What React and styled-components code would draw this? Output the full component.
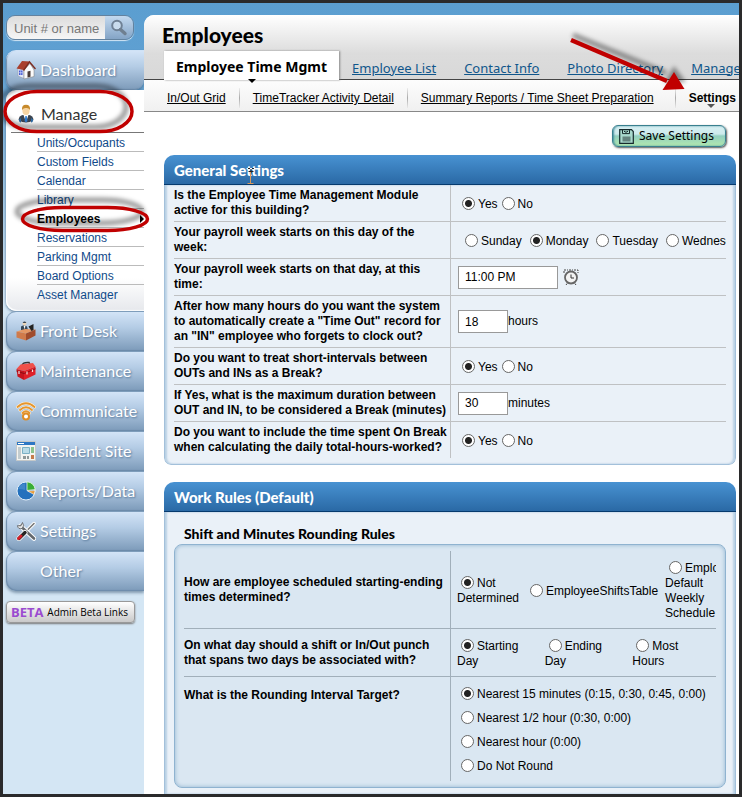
import React, { useState } from 'react';
import styled, { createGlobalStyle } from 'styled-components';

const App = () => {
  return (
    <>
      <GlobalStyle />
      <Frame>
        <Sidebar>
          <Search>
            <SearchInput aria-label='Unit # or name' placeholder='Unit # or name' />
            <SearchButton aria-label='Search'>
              <svg width='18' height='18' viewBox='0 0 18 18'>
                <circle cx='7' cy='6.5' r='4.8' fill='#c9dcee' stroke='#6f8195' strokeWidth='2' />
                <path d='M10.5 10.5 L15 14.5' stroke='#6f7f90' strokeWidth='3.4' strokeLinecap='round' />
              </svg>
            </SearchButton>
          </Search>
          <NavTab href='#dashboard' $first><NavIcon><HouseIcon /></NavIcon>Dashboard</NavTab>
          <OpenPanel>
            <OpenTab href='#manage'><NavIcon><PersonIcon /></NavIcon>Manage</OpenTab>
            <SubList>
              {manageLinks.map((name) => (
                <SubItem key={name}>
                  <SubLink href='#sub' $current={name === 'Employees'}>{name}</SubLink>
                </SubItem>
              ))}
            </SubList>
          </OpenPanel>
          {navTabs.map(({ name, Icon }) => (
            <NavTab key={name} href='#nav'>
              <NavIcon>{Icon && <Icon />}</NavIcon>{name}
            </NavTab>
          ))}
          <BetaButton><b>BETA</b>Admin Beta Links</BetaButton>
        </Sidebar>

        <Main>
          <Header>
            <Title>Employees</Title>
            <Tabs>
              <ActiveTab href='#time'>Employee Time Mgmt</ActiveTab>
              <Tab href='#list'>Employee List</Tab>
              <Tab href='#contact'>Contact Info</Tab>
              <Tab href='#photos'>Photo Directory</Tab>
              <Tab href='#manage-employees'>Manage</Tab>
            </Tabs>
          </Header>
          <SubNav>
            <SubNavLink href='#grid'>In/Out Grid</SubNavLink>
            <SubNavLink href='#activity'>TimeTracker Activity Detail</SubNavLink>
            <SubNavLink href='#summary'>Summary Reports / Time Sheet Preparation</SubNavLink>
            <SubNavLink href='#settings' $current>Settings</SubNavLink>
          </SubNav>

          <Content>
            <SaveButton>
              <svg width='15' height='15' viewBox='0 0 15 15'>
                <path d='M.7.7h11.8l1.8 1.8v11.8H.7z' fill='#a9d9cd' stroke='#16292b' strokeWidth='1.2' />
                <path d='M3.5 1v3.6h7V1M5 2.2q2 2.2 4 0' fill='none' stroke='#16292b' />
                <path d='M3.5 7.5h8v5h-8z' fill='#64837e' />
              </svg>
              Save Settings
            </SaveButton>
            <GeneralSettings />
            <WorkRules />
          </Content>
        </Main>
        <Markup />
      </Frame>
    </>
  );
};

const Choice = ({ name, value, label, current, onPick, narrow }) => {
  const [first, ...rest] = label.split(' ');
  return (
    <ChoiceLabel $narrow={narrow}>
      <FirstWord>
        <Radio type='radio' name={name} checked={current === value} onChange={() => onPick(value)} />
        {first}
      </FirstWord>
      {rest.length > 0 && ' ' + rest.join(' ')}
    </ChoiceLabel>
  );
};

const Choices = ({ name, options, start, narrow }) => {
  const [current, setCurrent] = useState(start);
  return options.map((label) => (
    <Choice
      key={label}
      name={name}
      value={label}
      label={label}
      current={current}
      onPick={setCurrent}
      narrow={narrow && label.includes(' ')}
    />
  ));
};

const GeneralSettings = () => (
  <Panel>
    <PanelTitle>General Settings</PanelTitle>
    <PanelBody>
      <Table>
        <tbody>
          <tr>
            <Question>Is the Employee Time Management Module active for this building?</Question>
            <Answer><Choices name='active' options={['Yes', 'No']} start='Yes' /></Answer>
          </tr>
          <tr>
            <Question>Your payroll week starts on this day of the week:</Question>
            <Answer>
              <DayRow><Choices name='day' options={days} start='Monday' /></DayRow>
            </Answer>
          </tr>
          <tr>
            <Question><label htmlFor='startTime'>Your payroll week starts on that day, at this time:</label></Question>
            <Answer>
              <Field>
                <TextBox id='startTime' $width={100} defaultValue='11:00 PM' />
                <ClockButton aria-label='Pick a time'><ClockIcon /></ClockButton>
              </Field>
            </Answer>
          </tr>
          <tr>
            <Question>
              <label htmlFor='autoOut'>
                After how many hours do you want the system to automatically create a "Time Out" record for an "IN" employee who forgets to clock out?
              </label>
            </Question>
            <Answer><Field><TextBox id='autoOut' $width={50} defaultValue='18' />hours</Field></Answer>
          </tr>
          <tr>
            <Question>Do you want to treat short-intervals between OUTs and INs as a Break?</Question>
            <Answer><Choices name='short' options={['Yes', 'No']} start='Yes' /></Answer>
          </tr>
          <tr>
            <Question>
              <label htmlFor='maxBreak'>If Yes, what is the maximum duration between OUT and IN, to be considered a Break (minutes)</label>
            </Question>
            <Answer><Field><TextBox id='maxBreak' $width={50} defaultValue='30' />minutes</Field></Answer>
          </tr>
          <tr>
            <Question>Do you want to include the time spent On Break when calculating the daily total-hours-worked?</Question>
            <Answer><Choices name='onBreak' options={['Yes', 'No']} start='Yes' /></Answer>
          </tr>
        </tbody>
      </Table>
    </PanelBody>
  </Panel>
);

const WorkRules = () => (
  <Panel $open>
    <PanelTitle>Work Rules (Default)</PanelTitle>
    <PanelBody $open>
      <RulesTitle>Shift and Minutes Rounding Rules</RulesTitle>
      <RulesBox>
        <Table $dark>
          <tbody>
            <tr>
              <Question>How are employee scheduled starting-ending times determined?</Question>
              <Answer $tall>
                <ShiftRow>
                  <Choices
                    name='shift'
                    options={['Not Determined', 'EmployeeShiftsTable', 'Employee Default Weekly Schedule']}
                    start='Not Determined'
                    narrow
                  />
                </ShiftRow>
              </Answer>
            </tr>
            <tr>
              <Question>On what day should a shift or In/Out punch that spans two days be associated with?</Question>
              <Answer $tall>
                <SpanRow>
                  <Choices name='span' options={['Starting Day', 'Ending Day', 'Most Hours']} start='Starting Day' narrow />
                </SpanRow>
              </Answer>
            </tr>
            <tr>
              <Question $top>What is the Rounding Interval Target?</Question>
              <Answer $list>
                <Stack>
                  <Choices
                    name='rounding'
                    options={roundings}
                    start='Nearest 15 minutes (0:15, 0:30, 0:45, 0:00)'
                  />
                </Stack>
              </Answer>
            </tr>
          </tbody>
        </Table>
      </RulesBox>
    </PanelBody>
  </Panel>
);

// red rings, arrow and text cursor drawn over the page
const Markup = () => (
  <Overlay width='736' height='240' viewBox='3 3 736 240'>
    <defs>
      <filter id='soft' x='-20%' y='-40%' width='140%' height='180%'>
        <feGaussianBlur stdDeviation='2' />
      </filter>
    </defs>
    <g fill='none' stroke='#000' strokeOpacity='.4' strokeWidth='5' filter='url(#soft)'>
      <rect x='-1' y='86' width='127' height='41' rx='30' ry='20' />
      <rect x='17' y='200' width='125' height='23' rx='40' ry='11.500' />
      <path d='M573 35 L666 73' />
    </g>
    <path d='M674 66 L686 82 L664 83z' fill='#000' fillOpacity='.4' filter='url(#soft)' />
    <g fill='none' stroke='#c00000'>
      <rect x='5' y='91.500' width='127' height='40' rx='32' ry='20' strokeWidth='3.500' />
      <rect x='22.500' y='207.500' width='125' height='23' rx='40' ry='11.500' strokeWidth='3.500' />
      <path d='M571 40 L667 81' strokeWidth='4.500' />
    </g>
    <path d='M674 72 L684.500 89 L662.500 90z' fill='#c00000' />
    <path d='M248 168.500h2M252 168.500h2M251 169v4M248.500 171.500h5' stroke='#222' fill='none' />
    <path d='M250.500 172v11M247.500 183.500h6' stroke='#d99a5c' fill='none' />
  </Overlay>
);

const HouseIcon = () => (
  <svg width='20' height='20' viewBox='0 0 20 20'>
    <path d='M2 8.500 L8 10 L8 18.500 L2 16z' fill='#e4e9f7' stroke='#8d93a5' strokeWidth='.5' />
    <path d='M8 10 L14 3.500 L18 10 L18 16.500 L8 19z' fill='#fbfbfb' stroke='#777' strokeWidth='.5' />
    <path d='M.5 8.500 L6 1 L14 1.500 L8 10z' fill='#a93f2d' />
    <path d='M7.500 10.500 L13.500 2 L19.500 9' fill='none' stroke='#7d2c20' strokeWidth='1.400' />
    <path d='M3 10.500h3.500v4.500H3z' fill='#4357d2' />
    <path d='M4.700 10.500v4.500M3 12.700h3.500' stroke='#dfe5ff' strokeWidth='.6' />
    <path d='M11.500 11.500l3-.7v6l-3 .8z' fill='#4b3d38' />
  </svg>
);

const PersonIcon = () => (
  <svg width='18' height='20' viewBox='1 0 18 20'>
    <path d='M2.500 16 Q3 11.500 7 11 L13 11 Q17 11.500 17.500 16 Q10 21 2.500 16z' fill='#3b4450' />
    <path d='M3 15.500 Q2.500 18 5 18.500 L5 14z' fill='#2f6ca5' />
    <path d='M17 15.500 Q17.500 18 15 18.500 L15 14z' fill='#2f6ca5' />
    <path d='M7.500 11 L10 18 L12.500 11z' fill='#fff' />
    <path d='M9.400 12h1.300l.8 5-1.500 1.500L8.600 17z' fill='#2c7bd0' />
    <ellipse cx='10' cy='6.500' rx='3.600' ry='4.500' fill='#f7d5a3' />
    <path d='M6 6 Q5.500 .8 10 .8 Q14.500 .8 14 6 Q12.500 3.500 10 4 Q7.500 3.800 6 6z' fill='#c78a2c' />
  </svg>
);

const DeskIcon = () => (
  <svg width='20' height='20' viewBox='0 0 20 20'>
    <path d='M5 9 L5 5.500 L8 4 L11 5.500 L12 9z' fill='#354657' />
    <path d='M7.500 4.500h2l-.8 4z' fill='#fff' />
    <circle cx='8.500' cy='2.600' r='2' fill='#e9d3b7' />
    <path d='M6.600 2Q8.500-.8 10.400 2z' fill='#354657' />
    <path d='M.5 10.500 L9 8 L19.500 8.500 L10 12.500z' fill='#e59865' />
    <path d='M.5 10.500 L10 12.500 V19.500 L.5 16.500z' fill='#cf7a4b' />
    <path d='M10 12.500 L19.500 8.500 V14.500 L10 19.500z' fill='#a04c2c' />
    <path d='M12.500 5.500l5-2.500v6l-2 1z' fill='#222' />
  </svg>
);

const ToolboxIcon = () => (
  <svg width='20' height='20' viewBox='0 0 20 20'>
    <path d='M6 5 Q6 1 13 1.500 L14 4' fill='none' stroke='#343434' strokeWidth='1.500' />
    <path d='M.5 8 L4.500 3.500 L17 2 L19.500 5.500 L8 10z' fill='#f0504a' />
    <path d='M.5 8 L8 10 V19 L1.500 15.500z' fill='#c61520' />
    <path d='M8 10 L19.500 5.500 V13.500 L8 19z' fill='#df2029' />
    <path d='M.5 10 L8 12.500 L19.500 7.800' fill='none' stroke='#8d0c14' />
    <path d='M3 10v3M11 10.500v3M16.500 8.500v2.500' stroke='#f6dede' strokeWidth='1.200' />
  </svg>
);

const SignalIcon = () => (
  <svg width='20' height='20' viewBox='0 0 20 20'>
    <g fill='none' strokeLinecap='round'>
      <path d='M1.500 6 Q10-1.500 18.500 6M4 9 Q10 3.500 16 9M6.500 12 Q10 8.500 13.500 12' stroke='#fff3df' strokeWidth='3' />
      <path d='M1.500 6 Q10-1.500 18.500 6M4 9 Q10 3.500 16 9M6.500 12 Q10 8.500 13.500 12' stroke='#e5962f' strokeWidth='1.800' />
    </g>
    <circle cx='10' cy='15.500' r='3' fill='#fff' stroke='#e08d25' strokeWidth='2' />
  </svg>
);

const SiteIcon = () => (
  <svg width='20' height='20' viewBox='0 0 20 20'>
    <path d='M.5.500h19v19H.5z' fill='#f3f4f1' stroke='#c5c8c8' />
    <path d='M1 1h18v3H1z' fill='#2d77c4' />
    <path d='M2 2.500h6' stroke='#fff' />
    <path d='M2 7h3M2 9h3M2 11h3M2 13h3M2 15h3M2 17h3' stroke='#93a5ad' />
    <path d='M6.500 6.500h7v6h-7z' fill='#b9dbe7' stroke='#7bb0c4' />
    <path d='M15 6h3v6h-3z' fill='#8bc48d' />
    <path d='M7 15h3v3H7zM11 15h2v3h-2z' fill='#8e9898' />
    <path d='M15 14h3v4h-3z' fill='#c57b4b' />
  </svg>
);

const PieIcon = () => (
  <svg width='20' height='20' viewBox='0 0 20 20'>
    <circle cx='10' cy='10' r='9' fill='#2471bd' stroke='#e3f0fa' />
    <path d='M11 9.500 V.8 Q18 1.500 19.300 8.500z' fill='#39ad36' stroke='#e9f7e3' strokeWidth='.8' />
    <path d='M11.500 10 L19.200 9.500 L18 13.500z' fill='#e59a38' stroke='#fff' strokeWidth='.6' />
    <path d='M2 8 Q4 2.500 9 2.500 V9 Q5 7.500 2 8z' fill='#3f86c9' />
  </svg>
);

const ToolsIcon = () => (
  <svg width='20' height='20' viewBox='0 0 20 20' fill='none' strokeLinecap='round'>
    <path d='M18 2.500 L10 10.500' stroke='#fff' strokeWidth='3.400' />
    <path d='M18 2.500 L10 10.500' stroke='#777' strokeWidth='1.600' />
    <path d='M4.500 5 L18 17.500' stroke='#fff' strokeWidth='4.500' />
    <path d='M4.500 5 L18 17.500' stroke='#63676c' strokeWidth='2.600' />
    <path d='M1.500 5 Q2 8.500 6 7.500 Q9 5 6.500 1.500 L5 4.500z' fill='#e8e8e8' stroke='#62666b' strokeWidth='.9' />
    <path d='M9 11.500 L3 17.500' stroke='#fff' strokeWidth='5' />
    <path d='M9 11.500 L3 17.500' stroke='#252525' strokeWidth='3.400' />
    <path d='M5 15 L2.500 17.500' stroke='#d3202a' strokeWidth='3' />
  </svg>
);

const ClockIcon = () => (
  <svg width='16' height='17' viewBox='0 0 16 17' fill='none' stroke='#666'>
    <path d='M1 4V1h4M11 1h4v3M3 16l1.500-2M13 16l-1.500-2M6 1h4' strokeDasharray='2 1' stroke='#444' />
    <circle cx='8' cy='8.500' r='6' fill='#f3f3f3' strokeWidth='1.800' />
    <path d='M8 5.500v3.500h3' stroke='#333' />
  </svg>
);

const manageLinks = [
  'Units/Occupants', 'Custom Fields', 'Calendar', 'Library', 'Employees',
  'Reservations', 'Parking Mgmt', 'Board Options', 'Asset Manager',
];

const navTabs = [
  { name: 'Front Desk', Icon: DeskIcon },
  { name: 'Maintenance', Icon: ToolboxIcon },
  { name: 'Communicate', Icon: SignalIcon },
  { name: 'Resident Site', Icon: SiteIcon },
  { name: 'Reports/Data', Icon: PieIcon },
  { name: 'Settings', Icon: ToolsIcon },
  { name: 'Other' },
];

const days = ['Sunday', 'Monday', 'Tuesday', 'Wednesday'];

const roundings = [
  'Nearest 15 minutes (0:15, 0:30, 0:45, 0:00)',
  'Nearest 1/2 hour (0:30, 0:00)',
  'Nearest hour (0:00)',
  'Do Not Round',
];

const GlobalStyle = createGlobalStyle`
  * {
    box-sizing: border-box;
  }

  body {
    margin: 0;
    font: 12px/15px 'Liberation Sans', Arial, sans-serif;
    color: #000;
  }

  button, input {
    font: inherit;
    color: inherit;
  }
`;

const Frame = styled.div`
  position: relative;
  display: flex;
  min-height: 100vh;
  overflow: hidden;
  border: 3px solid #2a2a2b;
  background: linear-gradient(#5b9ed0 0, #5fa0d2 60px, #d4e6f4 300px);
`;

const Overlay = styled.svg`
  position: absolute;
  top: 0;
  left: 0;
  pointer-events: none;
`;

const Sidebar = styled.nav`
  display: flex;
  flex-direction: column;
  flex: 0 0 141px;
  padding: 12px 0 0 3px;
`;

const Search = styled.div`
  display: flex;
  width: 128px;
  height: 25px;
  margin-bottom: 10px;
  overflow: hidden;
  border: 1px solid #63829f;
  border-radius: 9px;
  box-shadow: 0 1px 1px #d4e6f4;
`;

const SearchInput = styled.input`
  flex: 1;
  min-width: 0;
  padding: 2px 0 0 7px;
  border: 0;
  background: linear-gradient(#dcdcdc, #f6f6f6);
  font-size: 13px;

  &::placeholder {
    color: #777;
  }
`;

const SearchButton = styled.button`
  display: flex;
  align-items: center;
  justify-content: center;
  width: 28px;
  padding: 0;
  border: 0;
  background: linear-gradient(#c3d9ef, #84a4c6);
`;

const NavTab = styled.a`
  display: flex;
  align-items: center;
  height: 40px;
  padding: 0 0 2px 10px;
  border-top: 1px solid ${({ $first }) => ($first ? '#cfe2f6' : '#7e9dbb')};
  border-radius: ${({ $first }) => ($first ? '10px 0 10px 10px' : '10px 0 0 10px')};
  background: linear-gradient(#d3e4f7, #b4cce5 40%, #7c9ab9);
  box-shadow: inset 1px -1px 1px #6e8cab, 0 2px 3px rgba(50, 80, 110, 0.5);
  color: #fff;
  font: 16px/20px Lato, sans-serif;
  text-decoration: none;
  text-shadow: 1px 1px 2px #58789a;
`;

const NavIcon = styled.span`
  display: flex;
  flex: 0 0 24px;
`;

const OpenPanel = styled.div`
  border-radius: 10px 0 0 10px;
  background: linear-gradient(#fff 85%, #e6e8ec);
  box-shadow: inset 1px -1px 1px #fff, 0 1px 3px #51708e;
`;

const OpenTab = styled.a`
  display: flex;
  align-items: center;
  height: 43px;
  margin-left: 5px;
  padding: 6px 0 0 6px;
  border-bottom: 1px solid #777;
  color: #333;
  font: 16px/20px Lato, sans-serif;
  text-decoration: none;
`;

const SubList = styled.ul`
  margin: 0;
  padding: 0 0 7px 31px;
  list-style: none;
`;

const SubItem = styled.li`
  height: 19px;
  border-bottom: 1px solid #bbb;
  line-height: 20px;

  &:last-child {
    border-bottom: 0;
  }
`;

const SubLink = styled.a`
  display: flex;
  align-items: center;
  justify-content: space-between;
  color: ${({ $current }) => ($current ? '#000' : '#0f4a8a')};
  font-weight: ${({ $current }) => ($current ? 'bold' : 'normal')};
  text-decoration: none;

  &::after {
    content: '';
    display: ${({ $current }) => ($current ? 'block' : 'none')};
    border: 4px solid transparent;
    border-left-color: #000;
    border-right: 0;
  }
`;

const BetaButton = styled.button`
  display: flex;
  align-items: center;
  justify-content: space-between;
  width: 129px;
  height: 22px;
  margin-top: 10px;
  padding: 0 6px 0 4px;
  border: 1px solid #999;
  border-radius: 4px;
  background: linear-gradient(#fff, #c9c9c9);
  box-shadow: 0 1px 2px #777;
  font: 10px/14px 'Open Sans', sans-serif;
  white-space: nowrap;

  b {
    color: #9a4bd0;
    font-size: 13px;
  }
`;

const Main = styled.main`
  flex: 1;
  min-width: 0;
  margin-top: 12px;
  overflow: hidden;
  border-radius: 10px 0 0 0;
  background: #fff;
`;

const Header = styled.header`
  padding-left: 18px;
  border-bottom: 1px solid #444;
  background: linear-gradient(#fff, #dcdcdc 60%, #d8d8d8);
`;

const Title = styled.h1`
  margin: 0;
  padding: 8px 0 4px;
  font: 900 21px/24px Lato, sans-serif;
`;

const Tabs = styled.div`
  display: flex;
  align-items: center;
  gap: 28px;
  height: 28px;
  padding-left: 2px;
  font: 13px/20px 'Noto Sans', sans-serif;
  white-space: nowrap;
`;

const ActiveTab = styled.a`
  position: relative;
  height: 29px;
  margin: 0 -15px -1px 0;
  padding: 6px 12px 0;
  background: #fff;
  box-shadow: 1px 0 2px #888;
  color: #000;
  font-size: 14px;
  font-weight: bold;
  text-decoration: none;

  &::after {
    content: '';
    position: absolute;
    top: 28px;
    left: 50%;
    margin-left: -4px;
    border: 4px solid transparent;
    border-top-color: #000;
    border-bottom: 0;
  }
`;

const Tab = styled.a`
  padding-top: 5px;
  color: #10568b;
`;

const SubNav = styled.div`
  display: flex;
  height: 32px;
  padding: 8px 0 0 10px;
  border-bottom: 1px solid #888;
  background: linear-gradient(#fdfdfd, #f0f0f0);
  line-height: 20px;
  white-space: nowrap;
`;

const SubNavLink = styled.a`
  position: relative;
  height: 20px;
  padding: 0 13px;
  color: #000;
  font-weight: ${({ $current }) => ($current ? 'bold' : 'normal')};
  text-decoration: ${({ $current }) => ($current ? 'none' : 'underline')};

  & + & {
    border-left: 1px solid;
    border-image: linear-gradient(#f4f4f4, #aaa, #f0f0f0) 1;
  }

  &:last-child {
    margin-left: auto;
    padding-right: 3px;
  }

  &::after {
    content: '';
    display: ${({ $current }) => ($current ? 'block' : 'none')};
    position: absolute;
    bottom: 0;
    left: 50%;
    border: 4px solid transparent;
    border-top-color: #555;
    border-bottom: 0;
  }
`;

const Content = styled.div`
  display: flex;
  flex-direction: column;
  padding: 13px 3px 0 20px;
`;

const SaveButton = styled.button`
  display: flex;
  align-items: center;
  align-self: flex-end;
  gap: 5px;
  height: 22px;
  margin: 0 10px 8px 0;
  padding: 0 11px 0 6px;
  border: 1px solid #39808f;
  border-radius: 6px;
  background: linear-gradient(#d8f0f3 0, #cdeaec 40%, #92cfc0 50%, #b2e8ae);
  box-shadow: inset 1px 0 2px #458f9e, 1px 1px 2px #555;
  font: 12px/16px 'Noto Sans', sans-serif;
`;

const Panel = styled.section`
  border-radius: ${({ $open }) => ($open ? '10px 10px 0 0' : '10px 10px 7px 7px')};
  overflow: hidden;

  & + & {
    margin-top: 17px;
  }
`;

const PanelTitle = styled.h2`
  height: 30px;
  margin: 0;
  padding-left: 10px;
  border-bottom: 1px solid #063a6e;
  background: linear-gradient(#4892d2, #2a69a5);
  color: #fff;
  font: 900 15px/30px Lato, sans-serif;
`;

const PanelBody = styled.div`
  padding: ${({ $open }) => ($open ? '14px 9px 6px' : '0 9px 6px')};
  border: solid #a3c0da;
  border-width: ${({ $open }) => ($open ? '0 1px' : '0 1px 1px')};
  border-radius: ${({ $open }) => ($open ? 0 : '0 0 7px 7px')};
  background: #eaf1f8;
  box-shadow: inset 2px 0 2px #b9d0e4, inset -2px 0 2px #b9d0e4;
`;

const Table = styled.table`
  --line: ${({ $dark }) => ($dark ? '#a1afba' : '#bfc1c3')};
  width: 100%;
  table-layout: fixed;
  border-collapse: separate;
  border-spacing: 0;

  tr:last-child > * {
    border-bottom: 0;
  }
`;

const Question = styled.th`
  width: 50%;
  padding: ${({ $top }) => ($top ? '11px 2px 3px 0' : '3px 2px 3px 0')};
  border-bottom: 1px solid var(--line);
  text-align: left;
  vertical-align: ${({ $top }) => ($top ? 'top' : 'middle')};
`;

const Answer = styled.td`
  padding: ${({ $tall, $list }) => ($tall ? '7px 0 7px 6px' : $list ? '0 0 0 6px' : '0 0 0 7px')};
  border-left: 1px solid var(--line);
  border-bottom: 1px solid var(--line);
  overflow: hidden;
  white-space: ${({ $tall }) => ($tall ? 'normal' : 'nowrap')};
`;

const ChoiceLabel = styled.label`
  flex-shrink: 0;
  width: ${({ $narrow }) => ($narrow ? 'min-content' : 'auto')};
`;

const FirstWord = styled.span`
  white-space: nowrap;
`;

const Radio = styled.input`
  appearance: none;
  width: 13px;
  height: 13px;
  margin: 3px 3px 0 4px;
  border: 1px solid #666;
  border-radius: 50%;
  background: #fff;
  vertical-align: -2px;

  &:checked {
    background: radial-gradient(circle, #222 3px, #fff 4px);
  }
`;

const DayRow = styled.div`
  display: flex;
  gap: 4px;
  padding-left: 3px;
`;

const ShiftRow = styled.div`
  display: flex;
  align-items: center;
  gap: 7px;
`;

const SpanRow = styled.div`
  display: grid;
  grid-template-columns: repeat(3, 1fr);
  gap: 4px;
`;

const Stack = styled.div`
  display: flex;
  flex-direction: column;
  padding: 5px 0 3px;
  line-height: 24px;
`;

const Field = styled.div`
  display: flex;
  align-items: center;
`;

const TextBox = styled.input`
  width: ${({ $width }) => $width}px;
  height: 23px;
  padding: 0 6px;
  border: 1px solid #999;
  background: #fff;
`;

const ClockButton = styled.button`
  display: flex;
  margin-left: 5px;
  padding: 0;
  border: 0;
  background: none;
`;

const RulesTitle = styled.h3`
  margin: 0 0 3px;
  padding-left: 10px;
  font: 900 14px/15px Lato, sans-serif;
`;

const RulesBox = styled.div`
  padding: 6px 9px;
  border: 1px solid #8fb3d0;
  border-radius: 8px;
  background: #dae7f2;
  box-shadow: inset 0 0 4px #8fb3d0;
`;

export default App;
